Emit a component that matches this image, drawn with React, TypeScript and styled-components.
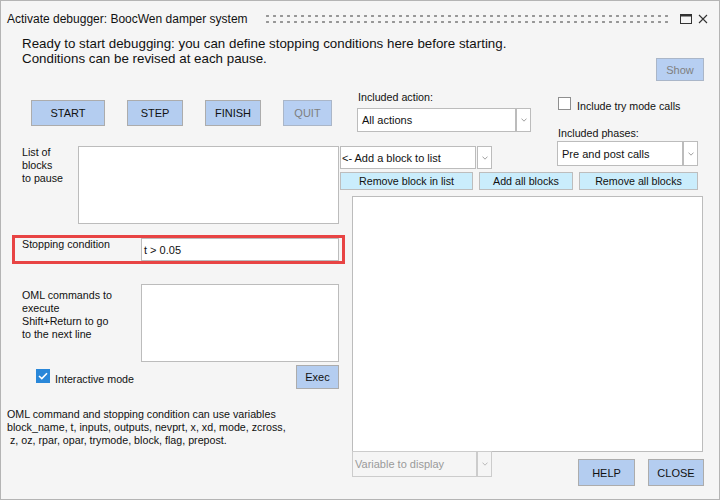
import styled, { createGlobalStyle } from "styled-components";

const GlobalStyle = createGlobalStyle`
  html, body {
    margin: 0;
    padding: 0;
    background: #f5f5f5;
  }
  body {
    font-family: "Liberation Sans", Arial, sans-serif;
    font-size: 10.7px;
    color: #111;
  }
  * {
    box-sizing: border-box;
  }
`;

const Window = styled.div`
  width: 720px;
  height: 500px;
  border: 1px solid #b4b4b4;
  background: #f5f5f5;
  display: flex;
  flex-direction: column;
  overflow: hidden;
`;

const TitleBar = styled.div`
  height: 35px;
  display: flex;
  align-items: center;
  padding: 0 11px 0 6px;
`;

const Title = styled.div`
  font-size: 12px;
  white-space: nowrap;
`;

const Grip = styled.div`
  flex: 1;
  height: 12px;
  margin: 0 8px 0 16px;
  background-image: radial-gradient(circle, #969696 1.1px, transparent 1.4px);
  background-size: 7px 6px;
  background-position: 0 0;
`;

const WindowControls = styled.div`
  display: flex;
  align-items: center;
  gap: 6px;
`;

const Header = styled.div`
  display: flex;
  align-items: flex-start;
`;

const Intro = styled.div`
  padding-left: 21px;
  font-size: 13.35px;
  line-height: 15px;
  white-space: nowrap;
`;

const ActionButton = styled.div<{ $w: number; $h?: number; $disabled?: boolean }>`
  width: ${({ $w }) => $w}px;
  height: ${({ $h }) => $h ?? 26}px;
  flex: none;
  display: flex;
  align-items: center;
  justify-content: center;
  background: ${({ $disabled }) => ($disabled ? "#b7cff2" : "#b4cdf0")};
  border: 1px solid ${({ $disabled }) => ($disabled ? "#aab6c8" : "#acacac")};
  color: ${({ $disabled }) => ($disabled ? "#7f7f7f" : "#111")};
  font-size: 11px;
`;

const ShowButton = styled(ActionButton)`
  margin: 22px 15px 0 auto;
`;

const Body = styled.div`
  display: flex;
`;

const LeftPane = styled.div`
  width: 339px;
  flex: none;
  display: flex;
  flex-direction: column;
`;

const RightPane = styled.div`
  width: 379px;
  flex: none;
  display: flex;
  flex-direction: column;
`;

const ButtonRow = styled.div`
  display: flex;
  gap: 22px;
  margin-top: 19px;
  padding-left: 30px;
`;

const FieldRow = styled.div<{ $top: number }>`
  display: flex;
  align-items: flex-start;
  margin-top: ${({ $top }) => $top}px;
  padding-left: 21px;
`;

const FieldLabel = styled.div<{ $w: number; $pad?: number }>`
  width: ${({ $w }) => $w}px;
  flex: none;
  line-height: 13px;
  padding-top: ${({ $pad }) => $pad ?? 0}px;
  white-space: nowrap;
`;

const Box = styled.div<{ $w: number; $h: number }>`
  width: ${({ $w }) => $w}px;
  height: ${({ $h }) => $h}px;
  flex: none;
  background: #fff;
  border: 1px solid #bcbcbc;
`;

const Highlight = styled.div`
  display: flex;
  align-items: flex-start;
  width: 333px;
  margin: 11px 0 0 11px;
  padding-left: 7px;
  border: 3px solid #e84444;
`;

const TextField = styled.div`
  width: 198px;
  height: 23px;
  flex: none;
  display: flex;
  align-items: center;
  padding-left: 2px;
  background: #fff;
  border: 1px solid #bcbcbc;
  font-size: 11px;
`;

const InteractiveRow = styled.div`
  display: flex;
  align-items: flex-start;
  margin-top: 3px;
  padding: 0 1px 0 35px;
`;

const CheckMark = styled.div<{ $checked?: boolean; $size: number }>`
  width: ${({ $size }) => $size}px;
  height: ${({ $size }) => $size}px;
  flex: none;
  display: flex;
  align-items: center;
  justify-content: center;
  background: ${({ $checked }) => ($checked ? "#2987d9" : "#fff")};
  border: 1px solid ${({ $checked }) => ($checked ? "#2987d9" : "#8f8f8f")};
`;

const CheckLabel = styled.div<{ $top: number; $left: number }>`
  margin: ${({ $top }) => $top}px 0 0 ${({ $left }) => $left}px;
  line-height: 13px;
  white-space: nowrap;
`;

const ExecButton = styled(ActionButton)`
  margin-left: auto;
`;

const Note = styled.div`
  margin-top: 19px;
  padding-left: 6px;
  line-height: 13px;
  white-space: nowrap;
`;

const TopArea = styled.div`
  display: flex;
  align-items: flex-start;
`;

const ActionColumn = styled.div`
  width: 192px;
  flex: none;
  display: flex;
  flex-direction: column;
  margin-top: 10px;
`;

const ActionGroup = styled.div`
  display: flex;
  flex-direction: column;
  gap: 4px;
  padding-left: 17px;
`;

const PhaseColumn = styled.div`
  display: flex;
  flex-direction: column;
  margin: 16px 0 0 25px;
`;

const PlainLabel = styled.div<{ $left?: number }>`
  line-height: 13px;
  padding-left: ${({ $left }) => $left ?? 0}px;
  white-space: nowrap;
`;

const CheckRow = styled.div`
  display: flex;
  align-items: flex-start;
  padding-left: 1px;
  margin-bottom: 14px;
`;

const Combo = styled.div<{ $top?: number }>`
  display: flex;
  margin-top: ${({ $top }) => $top ?? 0}px;
`;

const ComboField = styled.div<{ $w: number; $h: number; $pad: number; $disabled?: boolean }>`
  width: ${({ $w }) => $w}px;
  height: ${({ $h }) => $h}px;
  display: flex;
  align-items: center;
  padding-left: ${({ $pad }) => $pad}px;
  background: ${({ $disabled }) => ($disabled ? "#f5f5f5" : "#fff")};
  border: 1px solid ${({ $disabled }) => ($disabled ? "#cccccc" : "#bcbcbc")};
  color: ${({ $disabled }) => ($disabled ? "#9a9a9a" : "#111")};
  font-size: 11px;
  white-space: nowrap;
`;

const ComboArrow = styled.div<{ $h: number; $gap?: number; $disabled?: boolean }>`
  width: 15px;
  height: ${({ $h }) => $h}px;
  margin-left: ${({ $gap }) => $gap ?? 0}px;
  display: flex;
  align-items: center;
  justify-content: center;
  background: ${({ $disabled }) => ($disabled ? "#f5f5f5" : "#fff")};
  border: 1px solid ${({ $disabled }) => ($disabled ? "#cccccc" : "#bcbcbc")};
`;

const ToolRow = styled.div`
  display: flex;
  gap: 6px;
  margin-top: 3px;
`;

const ToolButton = styled.div<{ $w: number }>`
  width: ${({ $w }) => $w}px;
  height: 18px;
  display: flex;
  align-items: center;
  justify-content: center;
  background: #caedfc;
  border: 1px solid #bdbdbd;
  white-space: nowrap;
`;

const VariableBox = styled(Box)`
  margin: 6px 0 0 12px;
`;

const BottomRow = styled.div`
  display: flex;
  align-items: flex-start;
  margin: -1px 15px 0 12px;
`;

const HelpButton = styled(ActionButton)`
  margin: 8px 0 0 auto;
`;

const CloseButton = styled(ActionButton)`
  margin: 8px 0 0 13px;
`;

function Chevron({ color = "#a0a0a0" }: { color?: string }) {
  return (
    <svg width="6" height="4" viewBox="0 0 6 4">
      <polyline points="0.5,0.6 3,3.2 5.5,0.6" fill="none" stroke={color} strokeWidth="1" />
    </svg>
  );
}

type ComboBoxProps = {
  text: string;
  width: number;
  height: number;
  pad?: number;
  gap?: number;
  top?: number;
  disabled?: boolean;
};

function ComboBox({ text, width, height, pad = 4, gap = 0, top, disabled }: ComboBoxProps) {
  return (
    <Combo $top={top}>
      <ComboField $w={width} $h={height} $pad={pad} $disabled={disabled}>
        {text}
      </ComboField>
      <ComboArrow $h={height} $gap={gap} $disabled={disabled}>
        <Chevron color={disabled ? "#bababa" : "#a0a0a0"} />
      </ComboArrow>
    </Combo>
  );
}

export default function App() {
  return (
    <>
      <GlobalStyle />
      <Window>
        <TitleBar>
          <Title>Activate debugger: BoocWen damper system</Title>
          <Grip />
          <WindowControls>
            <svg width="12" height="10" viewBox="0 0 12 10">
              <rect x="0.5" y="0.5" width="11" height="9" fill="none" stroke="#333" strokeWidth="1" />
              <rect x="0.5" y="0.5" width="11" height="2" fill="#333" />
            </svg>
            <svg width="10" height="10" viewBox="0 0 10 10">
              <path d="M1 1 L9 9 M9 1 L1 9" stroke="#333" strokeWidth="1.1" fill="none" />
            </svg>
          </WindowControls>
        </TitleBar>

        <Header>
          <Intro>
            Ready to start debugging: you can define stopping conditions here before starting.
            <br />
            Conditions can be revised at each pause.
          </Intro>
          <ShowButton $w={48} $h={23} $disabled>
            Show
          </ShowButton>
        </Header>

        <Body>
          <LeftPane>
            <ButtonRow>
              <ActionButton $w={74}>START</ActionButton>
              <ActionButton $w={56}>STEP</ActionButton>
              <ActionButton $w={56}>FINISH</ActionButton>
              <ActionButton $w={49} $disabled>
                QUIT
              </ActionButton>
            </ButtonRow>

            <FieldRow $top={20}>
              <FieldLabel $w={56}>
                List of
                <br />
                blocks
                <br />
                to pause
              </FieldLabel>
              <Box $w={261} $h={78} />
            </FieldRow>

            <Highlight>
              <FieldLabel $w={119}>Stopping condition</FieldLabel>
              <TextField>t &gt; 0.05</TextField>
            </Highlight>

            <FieldRow $top={20}>
              <FieldLabel $w={119} $pad={5}>
                OML commands to
                <br />
                execute
                <br />
                Shift+Return to go
                <br />
                to the next line
              </FieldLabel>
              <Box $w={198} $h={78} />
            </FieldRow>

            <InteractiveRow>
              <CheckMark $checked $size={14} style={{ marginTop: 4 }}>
                <svg width="10" height="8" viewBox="0 0 10 8">
                  <polyline points="1,4 3.8,6.6 9,1.2" fill="none" stroke="#fff" strokeWidth="1.6" />
                </svg>
              </CheckMark>
              <CheckLabel $top={8} $left={5}>
                Interactive mode
              </CheckLabel>
              <ExecButton $w={43} $h={24}>
                Exec
              </ExecButton>
            </InteractiveRow>

            <Note>
              OML command and stopping condition can use variables
              <br />
              block_name, t, inputs, outputs, nevprt, x, xd, mode, zcross,
              <br />
              &nbsp;z, oz, rpar, opar, trymode, block, flag, prepost.
            </Note>
          </LeftPane>

          <RightPane>
            <TopArea>
              <ActionColumn>
                <ActionGroup>
                  <PlainLabel $left={1}>Included action:</PlainLabel>
                  <ComboBox text="All actions" width={159} height={24} pad={4} />
                </ActionGroup>
                <ComboBox text="<-  Add a block to list" width={136} height={23} pad={1} gap={1} top={14} />
              </ActionColumn>

              <PhaseColumn>
                <CheckRow>
                  <CheckMark $size={13} />
                  <CheckLabel $top={3} $left={6}>
                    Include try mode calls
                  </CheckLabel>
                </CheckRow>
                <PlainLabel $left={1}>Included phases:</PlainLabel>
                <ComboBox text="Pre and post calls" width={126} height={25} pad={4} top={1} />
              </PhaseColumn>
            </TopArea>

            <ToolRow>
              <ToolButton $w={133}>Remove block in list</ToolButton>
              <ToolButton $w={94}>Add all blocks</ToolButton>
              <ToolButton $w={119}>Remove all blocks</ToolButton>
            </ToolRow>

            <VariableBox $w={351} $h={256} />

            <BottomRow>
              <ComboBox text="Variable to display" width={125} height={26} pad={2} disabled />
              <HelpButton $w={57} $h={27}>
                HELP
              </HelpButton>
              <CloseButton $w={56} $h={27}>
                CLOSE
              </CloseButton>
            </BottomRow>
          </RightPane>
        </Body>
      </Window>
    </>
  );
}
